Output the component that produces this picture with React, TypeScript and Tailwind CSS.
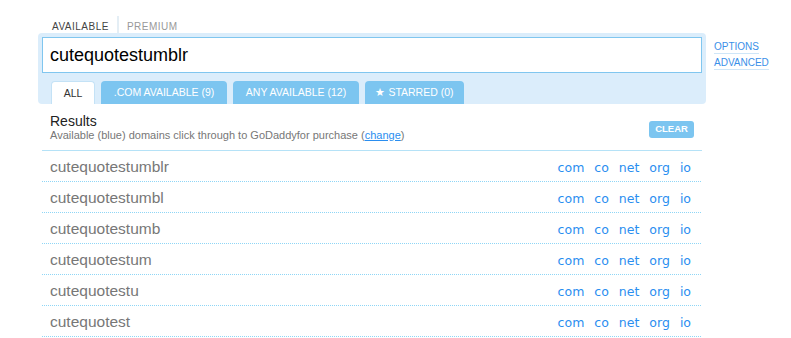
import React from 'react';

const ROWS = [
  'cutequotestumblr',
  'cutequotestumbl',
  'cutequotestumb',
  'cutequotestum',
  'cutequotestu',
  'cutequotest',
];

const TLDS = ['com', 'co', 'net', 'org', 'io'];

const TABS = [
  { label: 'ALL', w: 'w-[44px]', active: true },
  { label: '.COM AVAILABLE (9)', w: 'w-[126px]', active: false },
  { label: 'ANY AVAILABLE (12)', w: 'w-[126px]', active: false },
  { label: '★ STARRED (0)', w: 'w-[99px]', active: false },
];

export default function App() {
  return (
    <div className="w-[791px] h-[338px] overflow-hidden bg-white pl-[38px] pt-[16px] font-['Liberation_Sans',Arial,sans-serif]">
      {/* top switch */}
      <div className="flex h-[17px] items-start text-[10px] tracking-[0.5px] uppercase">
        <div className="pl-[14px] pr-[8px] pt-[3px] text-[#444]">Available</div>
        <div className="w-[2px] h-[17px] bg-[#e4eef5]" />
        <div className="pl-[8px] pt-[3px] text-[#999]">Premium</div>
      </div>

      <div className="flex items-start">
        <div className="w-[668px]">
          {/* search panel */}
          <div className="bg-[#dbedfb] rounded-[4px] px-[4px] pt-[4px]">
            <div className="h-[36px] bg-white border border-[#80c6ef] px-[7px] flex items-center text-[18px] text-black">
              cutequotestumblr
            </div>
            <div className="flex gap-[6px] pl-[9px] mt-[8px]">
              {TABS.map(t => (
                <div
                  key={t.label}
                  className={`${t.w} h-[23px] rounded-t-[4px] flex items-center justify-center pt-[1px] text-[10.5px] ${
                    t.active ? 'bg-white text-[#333] border border-b-0 border-[#c4e2f6]' : 'bg-[#7cc5f0] text-white'
                  }`}
                >
                  {t.label}
                </div>
              ))}
            </div>
          </div>

          {/* results */}
          <div className="px-[4px]">
            <div className="h-[46px] px-[8px] flex justify-between items-start">
              <div className="pt-[9px]">
                <div className="text-[14px] leading-[16px] text-[#222]">Results</div>
                <div className="text-[11px] leading-[13px] text-[#777]">
                  Available (blue) domains click through to GoDaddyfor purchase (
                  <span className="text-[#2a8ef0] underline">change</span>)
                </div>
              </div>
              <div className="mt-[17px] w-[45px] h-[17px] rounded-[3px] bg-[#7cc5f0] text-white text-[9.5px] font-bold flex items-center justify-center">
                CLEAR
              </div>
            </div>
            <div className="border-t border-[#b5e2f7]">
              {ROWS.map(r => (
                <div key={r}>
                  <div className="h-[30px] flex justify-between items-start">
                    <div className="pl-[8px] pt-[1px] text-[15.5px] leading-[30px] text-[#777]">{r}</div>
                    <div className="flex gap-[10px] pr-[11px] pt-[2px] leading-[30px] text-[12.5px] text-[#2a8ef0] font-['DejaVu_Sans',Verdana,sans-serif]">
                      {TLDS.map(t => (
                        <span key={t}>{t}</span>
                      ))}
                    </div>
                  </div>
                  <div className="h-px bg-[repeating-linear-gradient(to_right,#8fd6f6_0px,#8fd6f6_1px,transparent_1px,transparent_2px)]" />
                </div>
              ))}
            </div>
          </div>
        </div>

        {/* side links */}
        <div className="ml-[8px] pt-[7px] flex flex-col items-start gap-[2px] text-[10px] text-[#3a8fe8]">
          <span className="border-b border-[#cfe6f8] leading-[13px]">OPTIONS</span>
          <span className="border-b border-[#cfe6f8] leading-[13px]">ADVANCED</span>
        </div>
      </div>
    </div>
  );
}
